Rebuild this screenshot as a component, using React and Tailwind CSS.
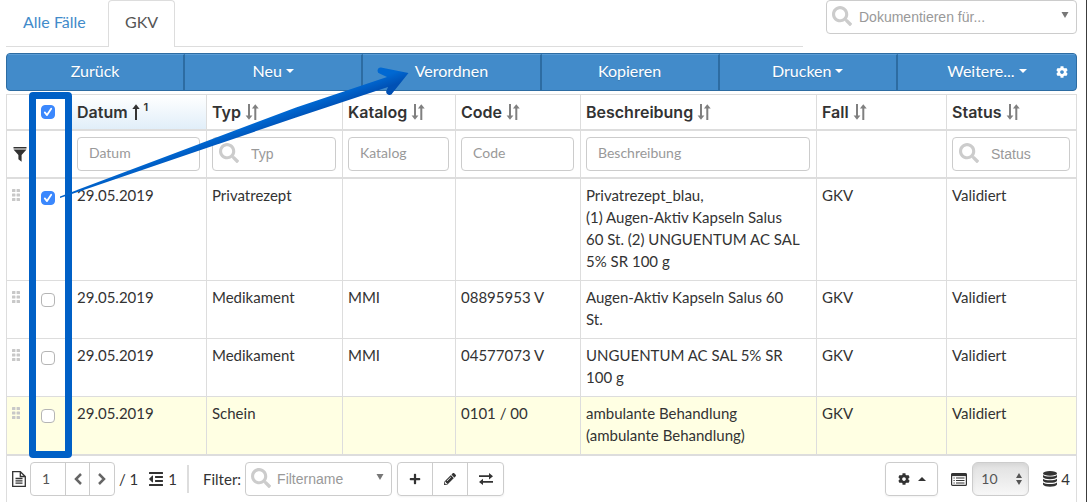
import { useState } from "react";
import {
  FaCog,
  FaOutdent,
  FaPencilAlt,
  FaPlus,
  FaSearch,
} from "react-icons/fa";
import clsx from "clsx";

const actions = [
  { label: "Zurück" },
  { label: "Neu", menu: true },
  { label: "Verordnen" },
  { label: "Kopieren" },
  { label: "Drucken", menu: true },
  { label: "Weitere...", menu: true, settings: true },
];

const columns = [
  { label: "Datum", width: "w-[135px]", filter: "text", sorted: true },
  { label: "Typ", width: "w-[136px]", filter: "search" },
  { label: "Katalog", width: "w-[113px]", filter: "text" },
  { label: "Code", width: "w-[125px]", filter: "text" },
  { label: "Beschreibung", width: "", filter: "text" },
  { label: "Fall", width: "w-[130px]" },
  { label: "Status", width: "w-[130px]", filter: "search" },
];

const entries = [
  {
    id: 1,
    cells: [
      "29.05.2019",
      "Privatrezept",
      "",
      "",
      "Privatrezept_blau,\n(1) Augen-Aktiv Kapseln Salus\n60 St. (2) UNGUENTUM AC SAL\n5% SR 100 g",
      "GKV",
      "Validiert",
    ],
  },
  {
    id: 2,
    cells: [
      "29.05.2019",
      "Medikament",
      "MMI",
      "08895953 V",
      "Augen-Aktiv Kapseln Salus 60\nSt.",
      "GKV",
      "Validiert",
    ],
  },
  {
    id: 3,
    cells: [
      "29.05.2019",
      "Medikament",
      "MMI",
      "04577073 V",
      "UNGUENTUM AC SAL 5% SR\n100 g",
      "GKV",
      "Validiert",
    ],
  },
  {
    id: 4,
    highlight: true,
    cells: [
      "29.05.2019",
      "Schein",
      "",
      "0101 / 00",
      "ambulante Behandlung\n(ambulante Behandlung)",
      "GKV",
      "Validiert",
    ],
  },
];

function Caret({ up }) {
  return (
    <svg
      viewBox="0 0 8 4"
      className={clsx("h-1 w-2 shrink-0 fill-current", up && "rotate-180")}
    >
      <path d="M0 0h8L4 4z" />
    </svg>
  );
}

function SelectArrow() {
  return (
    <svg
      viewBox="0 0 8 6"
      className="pointer-events-none absolute top-3 right-2 h-1.5 w-2 fill-[#777]"
    >
      <path d="M0.5 0h7L4 6z" />
    </svg>
  );
}

function SortIcon() {
  return (
    <svg
      viewBox="0 0 14 16"
      className="h-4 w-3.5 shrink-0 fill-none stroke-[#808080]"
      strokeWidth="2"
    >
      <path d="M4 0v13M10.300 16V3" />
      <path d="M0.600 11.500h6.800L4 15.800z" className="fill-[#808080]" stroke="none" />
      <path d="M6.900 4.500h6.800L10.300 0.200z" className="fill-[#808080]" stroke="none" />
    </svg>
  );
}

function SortedIcon() {
  return (
    <svg
      viewBox="0 0 8 16"
      className="h-4 w-2 shrink-0 fill-none stroke-[#333]"
      strokeWidth="2"
    >
      <path d="M4 16V3" />
      <path d="M0.300 5L4 0.300 7.700 5z" className="fill-[#333]" stroke="none" />
    </svg>
  );
}

function FilterIcon() {
  return (
    <svg viewBox="0 0 14 15" className="h-[15px] w-3.5 fill-[#333]">
      <path d="M0.500 0h13v1.500H0.500zM0.500 2.500h13L8.600 8v6.800L5.400 12.300V8z" />
    </svg>
  );
}

function DragHandle() {
  return (
    <svg viewBox="0 0 8 12" className="h-3 w-2 fill-[#c8c8c8]">
      {[0, 4.5, 9].map((y) => (
        <g key={y}>
          <rect x="0" y={y} width="3.4" height="3" rx="0.6" />
          <rect x="4.6" y={y} width="3.4" height="3" rx="0.6" />
        </g>
      ))}
    </svg>
  );
}

function FileIcon() {
  return (
    <svg
      viewBox="0 0 14 16"
      className="h-4 w-3.5 shrink-0 fill-none stroke-[#333]"
      strokeWidth="1.3"
    >
      <path d="M0.700 0.700h7.600l5 4.800v9.800H0.700zM8.300 0.700v4.800h5" />
      <path d="M3.500 7.500h7M3.500 9.800h7M3.500 12.100h7" />
    </svg>
  );
}

function ExchangeIcon() {
  return (
    <svg viewBox="0 0 14 12" className="h-3 w-3.5 fill-[#333]">
      <path d="M0 2.300h10V0l4 3.200-4 3.200V4H0zM14 8H4V5.700L0 8.900l4 3.100V9.700h10z" />
    </svg>
  );
}

function ListIcon() {
  return (
    <svg
      viewBox="0 0 16 13"
      className="h-[13px] w-4 shrink-0 fill-none stroke-[#333]"
    >
      <rect x="0.600" y="0.600" width="14.800" height="11.800" rx="1" strokeWidth="1.2" />
      <path d="M0.500 1.800h15" strokeWidth="2.600" />
      <path
        d="M2.500 5h1.200M5 5h8.500M2.500 7.500h1.200M5 7.500h8.500M2.500 10h1.200M5 10h8.500"
        strokeWidth="1.1"
      />
    </svg>
  );
}

function DatabaseIcon() {
  return (
    <svg viewBox="0 0 14 16" className="h-4 w-3.5 shrink-0 fill-[#333]">
      <ellipse cx="7" cy="2.400" rx="7" ry="2.400" />
      <path d="M0 4c2.500 2 11.500 2 14 0v2.200c-1.500 2.600-12.500 2.600-14 0z" />
      <path d="M0 7.700c2.500 2 11.500 2 14 0v2.200c-1.500 2.600-12.500 2.600-14 0z" />
      <path d="M0 11.400c2.500 2 11.500 2 14 0v2.200c-1.500 3-12.500 3-14 0z" />
    </svg>
  );
}

function Checkbox({ label, checked, onChange }) {
  return (
    <label className="relative block size-3.5">
      <input
        type="checkbox"
        aria-label={label}
        checked={checked}
        onChange={onChange}
        className="block size-3.5 appearance-none rounded-[4px] border border-[#b5b5b5] bg-white checked:border-[#3b88fd] checked:bg-[#3b88fd]"
      />
      {checked && (
        <svg
          viewBox="0 0 14 14"
          className="pointer-events-none absolute inset-0 fill-none stroke-white"
          strokeWidth="1.8"
          strokeLinecap="round"
          strokeLinejoin="round"
        >
          <path d="M3.800 7.400l2.200 2.700 4.200-6.300" />
        </svg>
      )}
    </label>
  );
}

function SearchSelect({ label, className }) {
  return (
    <div className={clsx("relative", className)}>
      <FaSearch className="pointer-events-none absolute top-1.5 left-1.5 size-5 text-[#ccc]" />
      <select
        aria-label={label}
        className="block h-[34px] w-full appearance-none rounded border border-[#ccc] bg-white pl-8 font-['Liberation_Sans',sans-serif] text-sm text-[#999]"
      >
        <option>{label}</option>
      </select>
      <SelectArrow />
    </div>
  );
}

function ColumnFilter({ column }) {
  if (!column.filter) return null;
  const search = column.filter === "search";
  return (
    <div className="relative">
      {search && (
        <FaSearch className="pointer-events-none absolute top-1.5 left-[7px] size-5 text-[#ccc]" />
      )}
      <input
        type="text"
        aria-label={column.label}
        placeholder={column.label}
        className={clsx(
          "block h-[34px] w-full rounded border border-[#ccc] bg-white text-sm placeholder:text-[#999]",
          search
            ? "pl-[38px] font-['Liberation_Sans',sans-serif]"
            : "pb-[3px] pl-[11px]",
        )}
      />
    </div>
  );
}

function Tabs() {
  return (
    <div className="flex items-start gap-[23px]">
      <nav className="flex h-[47px] flex-1 border-b border-[#ddd] text-base">
        <a
          href="#alle"
          className="w-[102px] pl-[17px] leading-[44px] text-[#428bca]"
        >
          Alle Fälle
        </a>
        <a
          href="#gkv"
          aria-current="page"
          className="h-[47px] w-[67px] rounded-t border border-b-0 border-[#ddd] bg-white text-center leading-[42px] text-[#555]"
        >
          GKV
        </a>
      </nav>
      <SearchSelect label="Dokumentieren für..." className="w-[251px]" />
    </div>
  );
}

function ActionBar() {
  return (
    <div className="mt-1.5 grid h-[38px] grid-cols-6 overflow-hidden rounded border border-[#2d6ca2] bg-[#428bca]">
      {actions.map((action) => (
        <div
          key={action.label}
          className="relative border-t border-r-2 border-t-[#5b9dd6] border-r-[#2d6ca2] last:border-r-0"
        >
          <button
            type="button"
            className="flex h-full w-full items-center justify-center gap-1 pb-[3px] text-base text-white text-shadow-2xs"
          >
            {action.label}
            {action.menu && <Caret />}
          </button>
          {action.settings && (
            <button
              type="button"
              aria-label="Einstellungen"
              className="absolute top-[11px] right-2 text-white"
            >
              <FaCog className="size-3" />
            </button>
          )}
        </div>
      ))}
    </div>
  );
}

function EntryTable() {
  const [selected, setSelected] = useState([1]);
  const [all, setAll] = useState(true);

  const toggle = (id) =>
    setSelected((cur) =>
      cur.includes(id) ? cur.filter((item) => item !== id) : [...cur, id],
    );

  return (
    <table className="w-full table-fixed border-separate border-spacing-0 border-t border-l border-[#ddd] text-left">
      <thead>
        <tr className="h-9">
          <th className="w-7 border-b-2 border-[#ddd]" />
          <th className="w-[37px] border-b-2 border-[#ddd] pl-1.5">
            <Checkbox
              label="Alle auswählen"
              checked={all}
              onChange={() => setAll(!all)}
            />
          </th>
          {columns.map((column) => (
            <th
              key={column.label}
              className={clsx(
                "border-r border-b-2 border-[#ddd] px-[5px] font-semibold",
                column.width,
                column.sorted && "bg-linear-to-b from-white to-[#e1eef9]",
              )}
            >
              <span className="flex items-center gap-1 font-['Inter',sans-serif] text-base leading-[22px]">
                {column.label}
                {column.sorted ? (
                  <>
                    <SortedIcon />
                    <sup className="text-[11px]">1</sup>
                  </>
                ) : (
                  <SortIcon />
                )}
              </span>
            </th>
          ))}
        </tr>
        <tr className="h-12">
          <td className="border-b-2 border-[#ddd] pl-1.5">
            <FilterIcon />
          </td>
          <td className="border-b-2 border-[#ddd]" />
          {columns.map((column) => (
            <td
              key={column.label}
              className="border-r border-b-2 border-[#ddd] pr-1.5 pl-[5px]"
            >
              <ColumnFilter column={column} />
            </td>
          ))}
        </tr>
      </thead>
      <tbody className="[&>tr:last-child>td]:border-b-2">
        {entries.map((entry) => (
          <tr
            key={entry.id}
            className={clsx("align-top", entry.highlight && "bg-[#ffffe3]")}
          >
            <td className="border-b border-[#ddd] pt-2.5 pl-[5px]">
              <DragHandle />
            </td>
            <td className="border-b border-[#ddd] pt-3 pl-1.5">
              <Checkbox
                label={`Eintrag ${entry.id}`}
                checked={selected.includes(entry.id)}
                onChange={() => toggle(entry.id)}
              />
            </td>
            {entry.cells.map((cell, i) => (
              <td
                key={columns[i].label}
                className="border-r border-b border-[#ddd] px-[5px] pt-[5px] pb-2 whitespace-pre-line"
              >
                {cell}
              </td>
            ))}
          </tr>
        ))}
      </tbody>
    </table>
  );
}

function Footer() {
  return (
    <footer className="flex items-center border-x border-[#ddd] px-[5px] py-1.5">
      <FileIcon />
      <div className="ml-1 flex h-[34px] divide-x divide-[#ccc] overflow-hidden rounded border border-[#ccc]">
        <input
          type="text"
          aria-label="Seite"
          defaultValue="1"
          className="w-[35px] pl-[11px] text-sm text-[#555]"
        />
        {["Zurück", "Weiter"].map((name, i) => (
          <button
            key={name}
            type="button"
            aria-label={`Seite ${name}`}
            className="flex w-6 items-center justify-center"
          >
            <svg
              viewBox="0 0 8 12"
              className="h-3 w-2 fill-none stroke-[#666]"
              strokeWidth="2.5"
            >
              <path d={i === 0 ? "M7 1L2 6l5 5" : "M1 1l5 5-5 5"} />
            </svg>
          </button>
        ))}
      </div>
      <span className="ml-1">/ 1</span>
      <FaOutdent className="ml-2.5 size-4" />
      <span className="ml-1">1</span>
      <div className="ml-2.5 h-7 w-0.5 bg-[#ddd]" />
      <label htmlFor="filtername" className="ml-3.5">
        Filter:
      </label>
      <div className="relative ml-1 w-[147px]">
        <FaSearch className="pointer-events-none absolute top-1.5 left-1.5 size-5 text-[#ccc]" />
        <select
          id="filtername"
          className="block h-[34px] w-full appearance-none rounded border border-[#ccc] bg-white pl-[31px] font-['Liberation_Sans',sans-serif] text-sm text-[#999]"
        >
          <option>Filtername</option>
        </select>
        <SelectArrow />
      </div>
      <div className="ml-[5px] flex h-[34px] divide-x divide-[#ccc] rounded border border-[#ccc] shadow-xs">
        <button
          type="button"
          aria-label="Filter hinzufügen"
          className="flex w-[35px] items-center justify-center"
        >
          <FaPlus className="size-3" />
        </button>
        <button
          type="button"
          aria-label="Filter bearbeiten"
          className="flex w-[35px] items-center justify-center"
        >
          <FaPencilAlt className="size-3" />
        </button>
        <button
          type="button"
          aria-label="Filter wechseln"
          className="flex w-[35px] items-center justify-center"
        >
          <ExchangeIcon />
        </button>
      </div>
      <button
        type="button"
        aria-label="Optionen"
        className="ml-auto flex h-[34px] w-[53px] items-center justify-center gap-2 rounded border border-[#ccc] shadow-xs"
      >
        <FaCog className="size-3" />
        <Caret up />
      </button>
      <div className="ml-[13px]">
        <ListIcon />
      </div>
      <div className="relative ml-[5px] w-[57px]">
        <select
          aria-label="Einträge pro Seite"
          className="block h-[34px] w-full appearance-none rounded-md border border-[#ccc] bg-linear-to-b from-[#e0e0e0] to-[#f7f7f7] pl-2 text-sm text-[#555] inset-shadow-sm"
        >
          <option>10</option>
          <option>25</option>
          <option>50</option>
        </select>
        <svg
          viewBox="0 0 6 12"
          className="pointer-events-none absolute top-[11px] right-[7px] h-3 w-1.5 fill-[#555]"
        >
          <path d="M0 5l3-5 3 5zM0 7l3 5 3-5z" />
        </svg>
      </div>
      <div className="ml-3.5">
        <DatabaseIcon />
      </div>
      <span className="mr-px ml-1">4</span>
    </footer>
  );
}

// Marks the selection column and points from the ticked entry to "Verordnen".
function Annotation() {
  return (
    <>
      <div className="pointer-events-none absolute -top-0.5 left-[23px] h-[366px] w-[43px] rounded-[4px] border-[7px] border-[#0060c6]" />
      <svg
        viewBox="0 0 360 140"
        className="pointer-events-none absolute -top-[34px] left-[50px] h-[140px] w-[360px]"
      >
        <defs>
          <linearGradient
            id="shaft"
            gradientUnits="userSpaceOnUse"
            x1="240"
            y1="48"
            x2="244"
            y2="59"
          >
            <stop offset="0" stopColor="#0068d2" />
            <stop offset="1" stopColor="#0050b4" />
          </linearGradient>
        </defs>
        <path
          d="M4 136.500L240 47.500 331 17l-7-3.200a3.200 3.200 0 0 1 1-6.300L352.500 13 336.500 33a3.200 3.200 0 0 1-6-2.500L332 27 240 57.500 4 138z"
          fill="url(#shaft)"
        />
      </svg>
    </>
  );
}

export default function App() {
  return (
    <div className="min-h-screen border-r border-[#3c3c3c] bg-white pr-[9px] pl-1.5 font-['Lato',sans-serif] text-[15px] leading-[22px] text-[#333]">
      <Tabs />
      <ActionBar />
      <div className="relative mt-[3px]">
        <EntryTable />
        <Annotation />
      </div>
      <Footer />
    </div>
  );
}
